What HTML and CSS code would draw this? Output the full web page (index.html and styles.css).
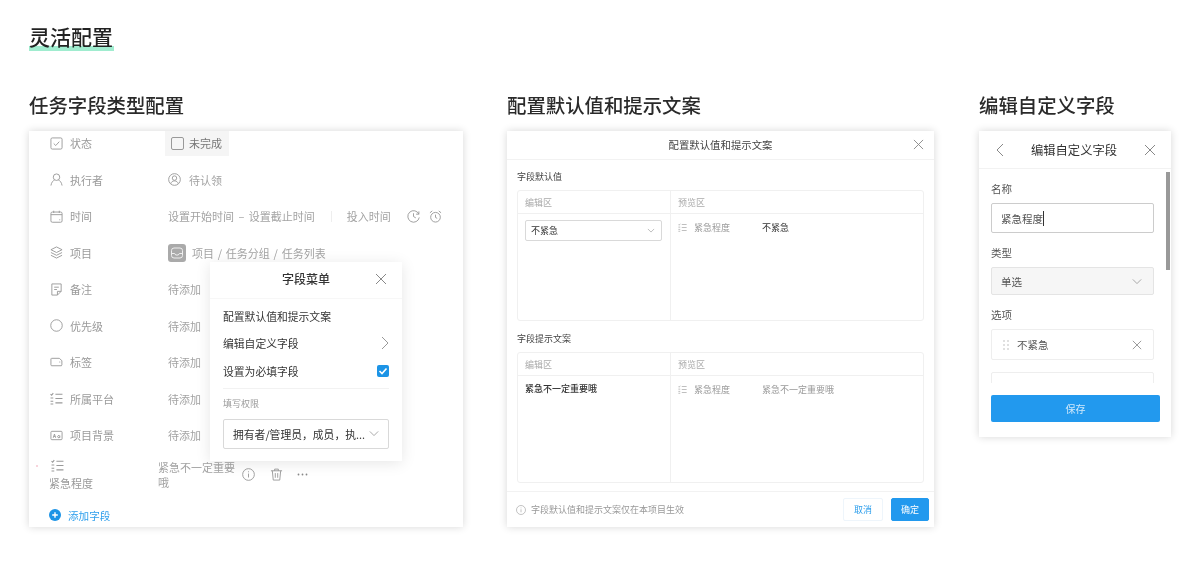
FILE: index.html
```html
<!DOCTYPE html>
<html lang="zh-CN">
<head>
    <meta charset="UTF-8">
    <meta name="viewport" content="width=device-width, initial-scale=1.0">
    <title>灵活配置</title>
    <link rel="stylesheet" href="styles.css">
</head>
<body>
    <svg class="sprites" width="0" height="0">
        <symbol id="i-close" viewBox="0 0 12 12"><path d="M1 1l10 10M11 1L1 11"/></symbol>
        <symbol id="i-down" viewBox="0 0 12 8"><path d="M1 1.500l5 5 5-5"/></symbol>
        <symbol id="i-list" viewBox="0 0 12 12"><path d="M5 2h6.500M5 6h6.500M5 10h6.500M.5 2l1 1 1.500-2M.5 5.500h2.500M.5 8.500h2.500M.5 11h2.500"/></symbol>
        <symbol id="i-info" viewBox="0 0 14 14"><circle cx="7" cy="7" r="6.300"/><path d="M7 6v4.200M7 3.600v1"/></symbol>
    </svg>

    <div class="page">
        <h1><span>灵活配置</span></h1>

        <div class="columns">
            <section class="col col-fields">
                <h2>任务字段类型配置</h2>
                <div class="card fields">
                    <div class="row">
                        <div class="label"><svg class="ico" viewBox="0 0 14 14"><rect x="1" y="1" width="12" height="12" rx="1.500"/><path d="M4 7l2.200 2.200L10 5"/></svg>状态</div>
                        <div class="value"><span class="chip"><i class="box"></i>未完成</span></div>
                    </div>
                    <div class="row">
                        <div class="label"><svg class="ico" viewBox="0 0 14 14"><circle cx="7" cy="4.500" r="3.500"/><path d="M1 13.500c.5-3.500 2.500-5.500 3.800-5.800M13 13.500c-.5-3.500-2.500-5.500-3.800-5.800"/></svg>执行者</div>
                        <div class="value"><svg class="ico ico-user" viewBox="0 0 14 14"><circle cx="7" cy="7" r="6.300"/><circle cx="7" cy="5.500" r="2.400"/><path d="M3 11.500c.6-2 2-3 4-3s3.400 1 4 3"/></svg>待认领</div>
                    </div>
                    <div class="row">
                        <div class="label"><svg class="ico" viewBox="0 0 14 14"><rect x="1" y="2.200" width="12" height="11" rx="1.500"/><path d="M1 5h12M4 .8v2.400M10 .8v2.400M10 10.500h1"/></svg>时间</div>
                        <div class="value time">
                            <span class="spaced">设置开始时间 – 设置截止时间</span>
                            <i class="sep"></i>
                            <span>投入时间</span>
                            <svg class="ico ico-clock" viewBox="0 0 14 14"><path d="M12.800 4.500A6.200 6.200 0 1 0 13.200 8M7 3.500V7l2.500 1.500M12.800 1.500v3h-3"/></svg>
                            <svg class="ico ico-alarm" viewBox="0 0 14 14"><circle cx="7" cy="7.800" r="5.200"/><path d="M7 5v3l1.800 1M1 3l2.500-2M13 3l-2.500-2"/></svg>
                        </div>
                    </div>
                    <div class="row">
                        <div class="label"><svg class="ico" viewBox="0 0 14 14"><path d="M7 1l6 3-6 3-6-3zM1 7l6 3 6-3M1 10l6 3 6-3"/></svg>项目</div>
                        <div class="value project">
                            <span class="proj-ico"><svg viewBox="0 0 14 14"><rect x="1.500" y="2" width="11" height="10" rx="2.500"/><path d="M1.500 7.500h3.200l1 1.500h2.600l1-1.500h3.200"/></svg></span><span class="path">项目 / 任务分组 / 任务列表</span>
                        </div>
                    </div>
                    <div class="row">
                        <div class="label"><svg class="ico" viewBox="0 0 14 14"><path d="M2 1h10v8l-4 4H2zM8 13V9h4M4.500 4.500h5M4.500 7h3"/></svg>备注</div>
                        <div class="value">待添加</div>
                    </div>
                    <div class="row">
                        <div class="label"><svg class="ico" viewBox="0 0 14 14"><circle cx="7" cy="7" r="6.200"/></svg>优先级</div>
                        <div class="value">待添加</div>
                    </div>
                    <div class="row">
                        <div class="label"><svg class="ico" viewBox="0 0 14 14"><path d="M1.500 2.500h8.500l2.800 2.500v4.500l-.5 1h-10.800l-.5-1v-6.500zM10 6.500h1"/></svg>标签</div>
                        <div class="value">待添加</div>
                    </div>
                    <div class="row">
                        <div class="label"><svg class="ico"><use href="#i-list"/></svg>所属平台</div>
                        <div class="value">待添加</div>
                    </div>
                    <div class="row">
                        <div class="label"><svg class="ico" viewBox="0 0 14 14"><rect x="1" y="2.500" width="12" height="9" rx="1"/><path d="M3.500 9.500l1.300-4 1.300 4M4 8h1.600M10.500 7v2.500M10.500 7.800a1.200 1.200 0 1 0 0 .9"/></svg>项目背景</div>
                        <div class="value">待添加</div>
                    </div>
                    <div class="row row-custom">
                        <i class="handle"></i>
                        <div class="label"><svg class="ico"><use href="#i-list"/></svg><span>紧急程度</span></div>
                        <div class="value">紧急不一定重要哦</div>
                        <div class="actions">
                            <svg class="ico"><use href="#i-info"/></svg>
                            <svg class="ico" viewBox="0 0 14 14"><path d="M1 3h12M5 3V1.200h4V3M2.500 3l1 10h7l1-10M5.700 5.500v5M8.300 5.500v5"/></svg>
                            <svg class="dots" viewBox="0 0 11 3"><circle cx="1.500" cy="1.500" r=".9"/><circle cx="5.500" cy="1.500" r=".9"/><circle cx="9.500" cy="1.500" r=".9"/></svg>
                        </div>
                    </div>
                    <div class="add">
                        <svg viewBox="0 0 12 12"><circle cx="6" cy="6" r="6" fill="#1c94e6"/><path d="M3.200 6h5.600M6 3.200v5.600" stroke="#fff" stroke-width="1.400"/></svg>
                        添加字段
                    </div>

                    <div class="menu">
                        <div class="menu-head">字段菜单<svg class="x"><use href="#i-close"/></svg></div>
                        <div class="menu-body">
                            <div class="menu-item">配置默认值和提示文案</div>
                            <div class="menu-item">编辑自定义字段<svg class="arrow" viewBox="0 0 8 14"><path d="M1 1l6 6-6 6"/></svg></div>
                            <div class="menu-item">设置为必填字段<span class="checked"><svg viewBox="0 0 12 12"><path d="M2.500 6l2.500 2.500L9.500 3.500"/></svg></span></div>
                            <div class="menu-sub">填写权限</div>
                            <div class="select menu-select">拥有者/管理员，成员，执...<svg class="chev"><use href="#i-down"/></svg></div>
                        </div>
                    </div>
                </div>
            </section>

            <section class="col col-defaults">
                <h2>配置默认值和提示文案</h2>
                <div class="card dialog">
                    <div class="dialog-head">配置默认值和提示文案<svg class="x"><use href="#i-close"/></svg></div>
                    <div class="dialog-body">
                        <h3>字段默认值</h3>
                        <div class="split">
                            <div class="pane pane-edit">
                                <div class="pane-head">编辑区</div>
                                <div class="pane-body">
                                    <div class="select small-select">不紧急<svg class="chev"><use href="#i-down"/></svg></div>
                                </div>
                            </div>
                            <div class="pane">
                                <div class="pane-head">预览区</div>
                                <div class="pane-body preview">
                                    <svg class="ico-sm"><use href="#i-list"/></svg>
                                    <span class="preview-label">紧急程度</span>
                                    <span class="preview-strong">不紧急</span>
                                </div>
                            </div>
                        </div>
                        <h3 class="second">字段提示文案</h3>
                        <div class="split">
                            <div class="pane pane-edit">
                                <div class="pane-head">编辑区</div>
                                <div class="pane-body"><div class="hint-text">紧急不一定重要哦</div></div>
                            </div>
                            <div class="pane">
                                <div class="pane-head">预览区</div>
                                <div class="pane-body preview">
                                    <svg class="ico-sm"><use href="#i-list"/></svg>
                                    <span class="preview-label">紧急程度</span>
                                    <span>紧急不一定重要哦</span>
                                </div>
                            </div>
                        </div>
                    </div>
                    <div class="dialog-foot">
                        <svg class="ico-note"><use href="#i-info"/></svg>
                        <span class="note">字段默认值和提示文案仅在本项目生效</span>
                        <button class="btn btn-ghost">取消</button>
                        <button class="btn btn-primary">确定</button>
                    </div>
                </div>
            </section>

            <section class="col col-edit">
                <h2>编辑自定义字段</h2>
                <div class="card editor">
                    <div class="editor-head">
                        <svg class="back" viewBox="0 0 8 14"><path d="M7 1L1 7l6 6"/></svg>
                        编辑自定义字段
                        <svg class="x"><use href="#i-close"/></svg>
                    </div>
                    <div class="editor-body">
                        <label>名称</label>
                        <div class="input">紧急程度<i class="caret"></i></div>
                        <label>类型</label>
                        <div class="input input-off">单选<svg class="chev"><use href="#i-down"/></svg></div>
                        <label>选项</label>
                        <div class="option">
                            <svg class="grip" viewBox="0 0 6 10"><circle cx="1" cy="1" r=".7"/><circle cx="5" cy="1" r=".7"/><circle cx="1" cy="5" r=".7"/><circle cx="5" cy="5" r=".7"/><circle cx="1" cy="9" r=".7"/><circle cx="5" cy="9" r=".7"/></svg>不紧急<svg class="x x-sm"><use href="#i-close"/></svg>
                        </div>
                        <div class="option"></div>
                        <div class="scrollbar"></div>
                    </div>
                    <div class="editor-foot"><button class="btn-save">保存</button></div>
                </div>
            </section>
        </div>
    </div>
</body>
</html>
```

FILE: styles.css
```css
* {
    box-sizing: border-box;
}
body {
    margin: 0;
    height: 583px;
    overflow: hidden;
    background-color: #fff;
    color: #333;
    font-family: "Noto Sans CJK SC", "Noto Sans", sans-serif;
    font-size: 11px;
}
svg {
    fill: none;
    stroke: currentColor;
    stroke-width: 1;
    flex: none;
}
.sprites {
    position: absolute;
}
.page {
    padding: 22px 0 0 29px;
    filter: blur(0.35px);
}
h1 {
    height: 29px;
    margin: 0 0 41px;
    font-size: 21px;
    line-height: 28px;
    font-weight: 500;
    color: #222;
}
h1 span {
    display: block;
    width: 85px;
    height: 29px;
    background: linear-gradient(#a0eccf, #a0eccf) 0 100% / 100% 5px no-repeat;
}
h2 {
    margin: 0 0 13px;
    font-size: 19.400px;
    line-height: 26px;
    font-weight: 500;
    color: #2a2a2a;
}
.columns {
    display: flex;
}
.col-fields {
    width: 434px;
    margin-right: 44px;
}
.col-defaults {
    width: 427px;
    margin-right: 45px;
}
.col-edit {
    width: 192px;
}
.card {
    position: relative;
    background-color: #fff;
    box-shadow: 0 0 8px rgba(0, 0, 0, 0.16);
}

/* task fields */
.fields {
    height: 396px;
    overflow: hidden;
    padding-top: 1px;
}
.row {
    display: flex;
    align-items: center;
    height: 36.5px;
    padding-left: 21px;
    color: #a3a3a3;
}
.row:first-child {
    margin-top: -7px;
}
.label {
    display: flex;
    align-items: center;
    width: 118px;
    color: #9a9a9a;
}
.ico {
    width: 13px;
    height: 13px;
    margin-right: 7px;
    color: #999;
}
.value {
    display: flex;
    align-items: center;
}
.chip {
    display: flex;
    align-items: center;
    height: 25px;
    margin-left: -3px;
    padding: 0 7px 0 6px;
    background-color: #f5f5f5;
    color: #777;
}
.box {
    width: 13px;
    height: 13px;
    margin-right: 5px;
    border: 1px solid #999;
    border-radius: 2px;
}
.ico-user {
    margin-right: 8px;
}
.spaced {
    word-spacing: 2px;
}
.path {
    word-spacing: 1.300px;
}
.sep {
    width: 1px;
    height: 11px;
    margin: 0 15px 0 16px;
    background-color: #eee;
}
.ico-clock {
    margin: 0 9px 0 16px;
}
.ico-alarm {
    margin-right: 0;
}
.proj-ico {
    display: flex;
    align-items: center;
    justify-content: center;
    width: 18px;
    height: 18px;
    margin-right: 6px;
    border-radius: 3px;
    background-color: #aaa;
    color: #eee;
}
.proj-ico svg {
    width: 14px;
    height: 14px;
}
.row-custom {
    position: relative;
    height: 38px;
    margin-top: 2px;
    padding-left: 20px;
}
.row-custom .label {
    display: block;
    width: 109px;
}
.row-custom .label svg {
    display: block;
    margin: 0 0 3px 2px;
}
.row-custom .value {
    width: 78px;
    line-height: 15px;
}
.handle {
    position: absolute;
    left: 7px;
    top: 9px;
    width: 2px;
    height: 2px;
    background-color: #f8d4dc;
}
.actions {
    display: flex;
    align-items: center;
    margin-left: 6px;
}
.actions .ico {
    margin-right: 15px;
}
.dots {
    width: 11px;
    height: 3px;
    margin: -1px 0 0 -1px;
    fill: #888;
    stroke: none;
}
.add {
    display: flex;
    align-items: center;
    margin: 14px 0 0 20px;
    font-size: 10.600px;
    color: #2f9fec;
}
.add svg {
    width: 12px;
    height: 12px;
    margin-right: 7px;
    stroke: none;
}

/* field menu popup */
.menu {
    position: absolute;
    left: 181px;
    top: 131px;
    width: 192px;
    height: 199px;
    background-color: #fff;
    box-shadow: 0 2px 14px rgba(0, 0, 0, 0.1);
}
.menu-head {
    position: relative;
    height: 37px;
    border-bottom: 1px solid #f7f7f7;
    text-align: center;
    font-size: 12px;
    line-height: 34px;
    font-weight: 500;
    color: #333;
}
.x {
    width: 12px;
    height: 12px;
    color: #888;
}
.menu-head .x {
    position: absolute;
    right: 15px;
    top: 11px;
}
.menu-body {
    padding: 3px 13px 0;
    font-size: 10.800px;
}
.menu-item {
    display: flex;
    align-items: center;
    justify-content: space-between;
    height: 27.500px;
    color: #333;
}
.arrow {
    width: 8px;
    height: 14px;
    color: #999;
}
.checked {
    display: flex;
    width: 12px;
    height: 12px;
    border-radius: 2px;
    background-color: #1c94e6;
    color: #fff;
}
.checked svg {
    stroke-width: 1.600;
}
.menu-sub {
    margin-top: 3px;
    padding-top: 8px;
    border-top: 1px solid #f2f2f2;
    font-size: 9px;
    line-height: 14px;
    color: #999;
}
.select {
    display: flex;
    align-items: center;
    justify-content: space-between;
    border: 1px solid #d9d9d9;
    border-radius: 2px;
    color: #333;
}
.menu-select {
    height: 30px;
    margin-top: 8px;
    padding: 0 9px;
}
.chev {
    width: 10px;
    height: 7px;
    color: #999;
}

/* defaults dialog */
.dialog {
    height: 396px;
}
.dialog-head {
    position: relative;
    height: 29px;
    border-bottom: 1px solid #f2f2f2;
    text-align: center;
    font-size: 10.400px;
    line-height: 28px;
    color: #444;
}
.dialog-head .x {
    position: absolute;
    right: 10px;
    top: 8px;
    width: 11px;
    height: 11px;
}
.dialog-body {
    padding: 9px 10px 0;
}
h3 {
    margin: 0 0 6px;
    font-size: 9px;
    line-height: 15px;
    font-weight: 400;
    color: #444;
}
h3.second {
    margin-top: 10px;
}
.split {
    display: flex;
    height: 131px;
    border: 1px solid #f0f0f0;
    border-radius: 3px;
}
.pane {
    flex: 1;
}
.pane-edit {
    flex: none;
    width: 153px;
    border-right: 1px solid #f0f0f0;
}
.pane-head {
    height: 23px;
    padding-left: 7px;
    border-bottom: 1px solid #f0f0f0;
    font-size: 9px;
    line-height: 23px;
    color: #aaa;
}
.pane-body {
    padding: 6px 8px 6px 7px;
    font-size: 9px;
}
.small-select {
    height: 21px;
    padding: 0 6px 0 5px;
    font-size: 9px;
}
.small-select .chev {
    width: 8px;
    height: 5px;
}
.preview {
    display: flex;
    align-items: center;
    padding-top: 7px;
    line-height: 13px;
    color: #999;
}
.ico-sm {
    width: 9px;
    height: 9px;
    margin-right: 7px;
    color: #aaa;
}
.preview-label {
    width: 68px;
}
.preview-strong {
    color: #333;
}
.hint-text {
    line-height: 13px;
    font-weight: 500;
    color: #333;
}
.dialog-foot {
    display: flex;
    align-items: center;
    height: 36px;
    margin-top: 8px;
    padding: 0 5px 0 9px;
    border-top: 1px solid #f2f2f2;
}
.ico-note {
    width: 10px;
    height: 10px;
    margin-right: 5px;
    color: #aaa;
}
.note {
    flex: 1;
    font-size: 9px;
    color: #999;
}
.btn {
    width: 40px;
    height: 23px;
    padding: 0;
    border: 1px solid #eef5fb;
    border-radius: 2px;
    background-color: #fff;
    font-family: inherit;
    font-size: 9px;
    color: #2f9fec;
}
.btn-primary {
    width: 38px;
    margin-left: 8px;
    border-color: #2299ee;
    background-color: #2299ee;
    color: #fff;
}

/* custom field editor */
.editor {
    height: 306px;
    overflow: hidden;
}
.editor-head {
    display: flex;
    align-items: center;
    justify-content: space-between;
    height: 38px;
    padding: 0 15px 0 17px;
    border-bottom: 1px solid #f2f2f2;
    font-size: 12.300px;
    color: #333;
}
.back {
    width: 8px;
    height: 14px;
    color: #888;
}
.editor-body {
    position: relative;
    height: 214px;
    padding: 12px 17px 0 12px;
    overflow: hidden;
}
.editor-body label {
    display: block;
    font-size: 10.500px;
    line-height: 16px;
    color: #555;
}
.input {
    display: flex;
    align-items: center;
    height: 30px;
    margin: 6px 0 12px;
    padding: 0 9px;
    border: 1px solid #ccc;
    border-radius: 2px;
    font-size: 10.500px;
    color: #555;
}
.caret {
    width: 1px;
    height: 15px;
    background-color: #333;
}
.input-off {
    justify-content: space-between;
    height: 28px;
    margin-bottom: 12px;
    padding-right: 11px;
    border-color: #e4e4e4;
    background-color: #f6f6f6;
}
.option {
    display: flex;
    align-items: center;
    height: 31px;
    margin: 6px 0 12px;
    padding: 0 11px;
    border: 1px solid #eee;
    border-radius: 2px;
    font-size: 10.500px;
    color: #555;
}
.grip {
    width: 6px;
    height: 10px;
    margin-right: 8px;
    fill: #aaa;
    stroke: none;
}
.x-sm {
    width: 10px;
    height: 10px;
    margin-left: auto;
}
.scrollbar {
    position: absolute;
    right: 1px;
    top: 3px;
    width: 4px;
    height: 98px;
    background-color: #999;
}
.editor-foot {
    height: 54px;
    padding: 12px 11px 0 12px;
}
.btn-save {
    display: block;
    width: 100%;
    height: 27px;
    padding: 0;
    border: 0;
    border-radius: 2px;
    background-color: #2299ee;
    font-family: inherit;
    font-size: 10px;
    color: #cfe8fa;
}
```
